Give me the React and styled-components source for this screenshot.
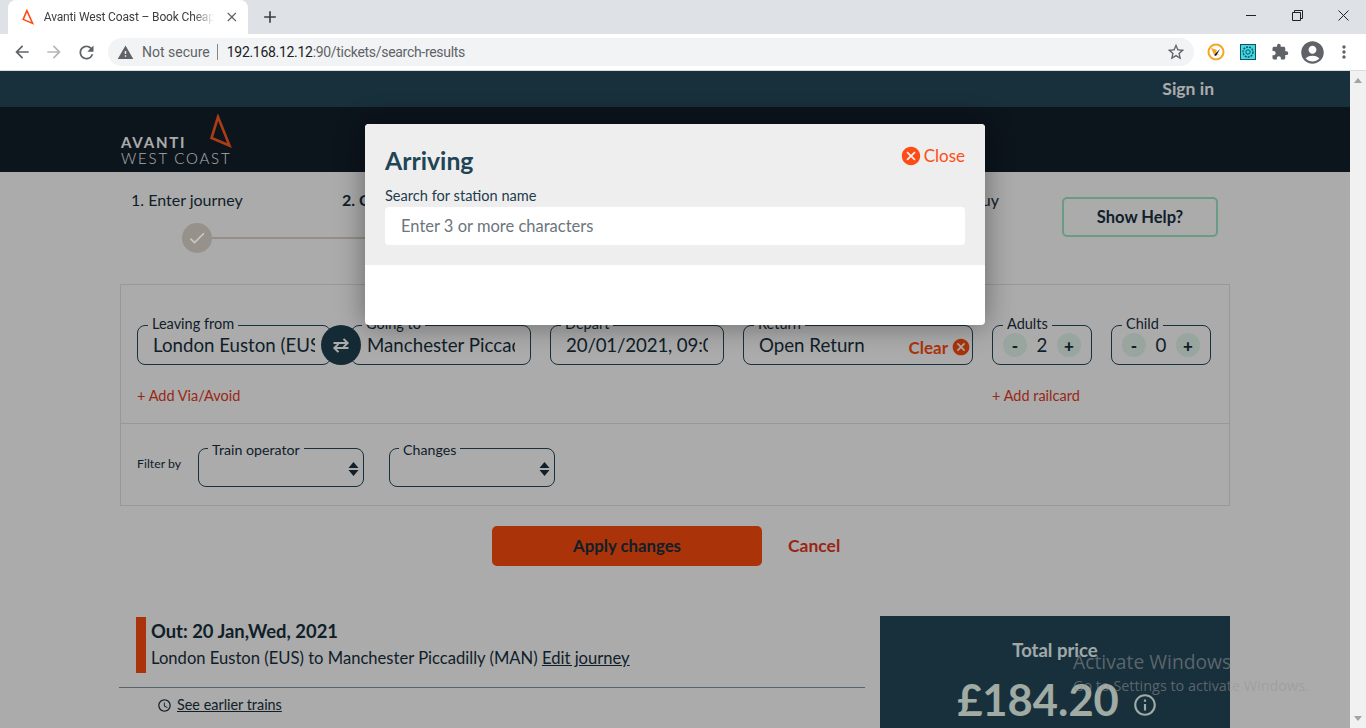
import styled, { createGlobalStyle } from "styled-components"
import {
  MdArrowBack, MdArrowForward, MdRefresh, MdWarning, MdStarBorder, MdExtension,
  MdAccountCircle, MdMoreVert, MdClose, MdAdd, MdCancel, MdCheck,
  MdAccessTime, MdInfoOutline,
} from "react-icons/md"

const GlobalStyle = createGlobalStyle`
  html, body { margin: 0; height: 728px; overflow: hidden; background: #fff; }
  * { box-sizing: border-box; }
  body { font-family: "Lato", "Liberation Sans", sans-serif; color: #17303e; }
`

const Shell = styled.div`
  width: 1366px;
  height: 728px;
  display: flex;
  flex-direction: column;
  overflow: hidden;
`

/* browser chrome */
const TabStrip = styled.div`
  height: 34px;
  background: #dee1e6;
  display: flex;
  align-items: flex-end;
  padding-left: 8px;
`
const Tab = styled.div`
  width: 240px;
  height: 34px;
  background: #fff;
  border-radius: 8px 8px 0 0;
  display: flex;
  align-items: center;
  padding: 0 8px 0 14px;
  gap: 10px;
`
const TabTitle = styled.span`
  width: 174px;
  overflow: hidden;
  white-space: nowrap;
  font: 12px "Roboto", "Liberation Sans", sans-serif;
  letter-spacing: -0.15px;
  color: #3c4043;
  -webkit-mask-image: linear-gradient(to right, #000 88%, transparent);
  mask-image: linear-gradient(to right, #000 88%, transparent);
`
const NewTab = styled.div`
  width: 28px;
  height: 28px;
  margin: 0 0 3px 8px;
  display: flex;
  align-items: center;
  justify-content: center;
  color: #3c4043;
`
const WindowControls = styled.div`
  margin-left: auto;
  height: 34px;
  display: flex;
  color: #202124;
`
const WindowButton = styled.div`
  width: 46px;
  height: 30px;
  display: flex;
  align-items: center;
  justify-content: center;
`
const Toolbar = styled.div`
  height: 37px;
  background: #fff;
  border-bottom: 1px solid #dadce0;
  display: flex;
  align-items: center;
  padding-left: 8px;
  position: relative;
`
const NavButton = styled.div`
  width: 28px;
  height: 28px;
  margin-right: 4px;
  display: flex;
  align-items: center;
  justify-content: center;
  color: ${(p) => (p.$off ? "#b4b6b9" : "#5f6368")};
`
const Omnibox = styled.div`
  width: 1086px;
  height: 28px;
  margin-left: 4px;
  border-radius: 14px;
  background: #f1f3f4;
  display: flex;
  align-items: center;
  padding: 0 8px 0 9px;
  font: 14px "Roboto", "Liberation Sans", sans-serif;
  color: #5f6368;
`
const Secure = styled.span`
  margin-left: 8px;
  padding-right: 7px;
  border-right: 1px solid #80868b;
  line-height: 16px;
`
const Url = styled.span`
  margin-left: 9px;
  letter-spacing: -0.3px;
  b { font-weight: 400; color: #202124; }
`
const StarSlot = styled.div`
  margin-left: auto;
  display: flex;
  color: #5f6368;
`
const Extensions = styled.div`
  display: flex;
  align-items: center;
  padding-left: 6px;
  color: #5f6368;
`
const ExtSlot = styled.div`
  width: 32px;
  height: 28px;
  display: flex;
  align-items: center;
  justify-content: center;
`

/* page */
const Viewport = styled.div`
  flex: 1;
  min-height: 0;
  display: flex;
  position: relative;
`
const Page = styled.div`
  width: 1350px;
  height: 657px;
  overflow: hidden;
  position: relative;
  background: #fff;
`
const Scrollbar = styled.div`
  width: 16px;
  background: #f1f1f1;
  display: flex;
  flex-direction: column;
  justify-content: space-between;
  align-items: center;
  padding: 7px 0;
`
const ScrollArrow = styled.div`
  width: 0;
  height: 0;
  border-left: 4px solid transparent;
  border-right: 4px solid transparent;
  ${(p) => (p.$down ? "border-top: 5px solid #a3a3a3;" : "border-bottom: 5px solid #a3a3a3;")}
`
const TopBar = styled.div`
  height: 36px;
  background: #24465a;
  display: flex;
  align-items: center;
  justify-content: flex-end;
  padding: 0 136px 2px 0;
  color: #fff;
  font-size: 17.500px;
  font-weight: 700;
`
const Masthead = styled.div`
  height: 65px;
  background: #131f2b;
  padding-left: 121px;
`
const Logo = styled.div`
  width: 112px;
  height: 65px;
  position: relative;
  color: #fff;
`
const LogoMark = styled.svg`
  position: absolute;
  left: 88px;
  top: 7px;
`
const LogoTop = styled.div`
  position: absolute;
  left: 0;
  top: 26px;
  font-size: 15px;
  line-height: 18px;
  font-weight: 700;
  letter-spacing: 1.8px;
`
const LogoBottom = styled.div`
  position: absolute;
  left: 0;
  top: 42px;
  font-size: 15px;
  line-height: 18px;
  font-weight: 300;
  letter-spacing: 1.800px;
  white-space: nowrap;
`
const Container = styled.div`
  width: 1110px;
  margin: 0 auto;
`
const StepRow = styled.div`
  height: 112px;
  display: flex;
  padding: 18px 12px 0 11px;
`
const Steps = styled.div`
  width: 868px;
  display: grid;
  grid-template-columns: 211px 211px 211px 1fr;
`
const Step = styled.div`
  font-size: 16px;
  line-height: 20px;
  font-weight: ${(p) => (p.$active ? 700 : 400)};
  text-align: ${(p) => (p.$end ? "right" : "left")};
`
const StepTrack = styled.div`
  margin: 13px -200px 0 51px;
  height: 30px;
  display: flex;
  align-items: center;
`
/* the done marker keeps its own muted colours above the dim layer */
const StepDot = styled.div`
  width: 30px;
  height: 30px;
  flex: none;
  position: relative;
  z-index: 6;
  border-radius: 50%;
  background: #96918a;
  color: #cbc8c3;
  display: flex;
  align-items: center;
  justify-content: center;
`
const StepLine = styled.div`
  flex: 1;
  height: 2px;
  background: #dcd4ca;
`
const HelpButton = styled.button`
  margin: 7px 0 0 auto;
  padding: 0;
  width: 156px;
  height: 40px;
  background: #fff;
  border: 2px solid #9fe8c6;
  border-radius: 5px;
  font: 700 16.500px "Lato", sans-serif;
  color: #17303e;
`
const SearchCard = styled.div`
  border: 1px solid #e6e3df;
`
const JourneySection = styled.div`
  padding: 32px 16px 17px;
  border-bottom: 1px solid #e6e3df;
`
const FieldRow = styled.div`
  display: flex;
  gap: 19px;
`
const Pair = styled.div`
  display: flex;
`
const Field = styled.fieldset`
  margin: 0;
  padding: 0;
  width: ${(p) => p.$w}px;
  height: ${(p) => p.$h || 48}px;
  min-width: 0;
  flex: none;
  border: 1px solid #244a5d;
  border-radius: 8px;
`
const Legend = styled.legend`
  margin-left: 10px;
  padding: 0 4px;
  font-size: 14.500px;
  line-height: 16px;
  transform: translateY(-1px);
`
const FilterLegend = styled(Legend)`
  margin-left: 9px;
  font-size: 14.200px;
  transform: translateY(2px);
`
const Value = styled.div`
  margin: -3px 15px 0;
  font-size: 18.700px;
  line-height: 30px;
  white-space: nowrap;
  overflow: hidden;
`
const DateValue = styled(Value)`
  letter-spacing: -0.15px;
`
const SwapButton = styled.div`
  width: 40px;
  height: 40px;
  margin: 8px -10px 0;
  position: relative;
  z-index: 1;
  flex: none;
  border-radius: 50%;
  background: #1f4151;
  display: flex;
  align-items: center;
  justify-content: center;
`
const ClearRow = styled.div`
  margin-top: -3px;
  height: 30px;
  padding: 0 1px 0 15px;
  display: flex;
  align-items: center;
  justify-content: space-between;
  font-size: 18.700px;
`
const ClearLink = styled.span`
  align-self: flex-end;
  height: 26px;
  display: flex;
  align-items: center;
  gap: 3px;
  font-size: 17px;
  font-weight: 700;
  color: #ff4c10;
`
const Counter = styled.div`
  margin-top: -3px;
  padding: 0 10px;
  display: flex;
  align-items: center;
  justify-content: space-between;
  height: 30px;
  font-size: 18.700px;
`
const Round = styled.div`
  width: 24px;
  height: 24px;
  border-radius: 50%;
  background: #e4f8ee;
  display: flex;
  align-items: center;
  justify-content: center;
  font-weight: 900;
  font-size: 17px;
  color: #17303e;
`
const LinkRow = styled.div`
  margin-top: 21px;
  display: flex;
  justify-content: space-between;
`
const AddLink = styled.a`
  width: ${(p) => p.$w || "auto"};
  font-size: 14.500px;
  line-height: 20px;
  color: #e53a22;
`
const FilterSection = styled.div`
  padding: 16px 16px 18px;
  display: flex;
  gap: 17px;
`
const FilterLabel = styled.span`
  font-size: 12.300px;
  margin-top: 16px;
`
const Selects = styled.div`
  display: flex;
  gap: 25px;
`
const SortIcon = styled.div`
  display: flex;
  justify-content: flex-end;
  padding: 6px 4px 0 0;
`
const Actions = styled.div`
  margin: 20px 0 0 372px;
  display: flex;
  align-items: center;
  gap: 26px;
`
const ApplyButton = styled.button`
  width: 270px;
  height: 40px;
  padding: 0 0 2px;
  border: 0;
  border-radius: 5px;
  background: #ff4c10;
  font: 700 16.800px "Lato", sans-serif;
  color: #17303e;
`
const CancelLink = styled.a`
  font-size: 17.500px;
  font-weight: 700;
  padding-bottom: 2px;
  color: #e5391f;
`
const Results = styled.div`
  margin-top: 50px;
  display: grid;
  grid-template-columns: 745px 350px;
  column-gap: 15px;
`
const OutBlock = styled.div`
  margin: 1px 0 0 16px;
  height: 56px;
  border-left: 10px solid #ff4c10;
  padding-left: 5px;
`
const OutTitle = styled.div`
  font-size: 18.400px;
  line-height: 28px;
  font-weight: 700;
`
const OutRoute = styled.div`
  font-size: 16.600px;
  line-height: 26px;
  white-space: nowrap;
  a { text-decoration: underline; }
`
const EarlierRow = styled.div`
  margin: 14px 0 0 -1px;
  border-top: 1px solid #7f95a3;
  padding: 8px 0 0 38px;
  display: flex;
  align-items: center;
  gap: 5px;
  font-size: 14.400px;
  line-height: 18px;
  span { text-decoration: underline; }
`
const PriceCard = styled.div`
  height: 180px;
  background: #24465a;
  padding-top: 22px;
  text-align: center;
  color: #eefcfb;
`
const PriceLabel = styled.div`
  font-size: 18.500px;
  line-height: 24px;
  font-weight: 700;
`
const PriceRow = styled.div`
  margin-top: 9px;
  padding-left: 5px;
  display: flex;
  align-items: center;
  justify-content: center;
  gap: 13px;
  font-size: 43.500px;
  line-height: 56px;
  font-weight: 700;
  color: #eefff4;
`
const InfoSlot = styled.div`
  display: flex;
  margin-top: 11px;
`
const Overlay = styled.div`
  position: absolute;
  inset: 0;
  z-index: 5;
  background: rgba(0, 0, 0, 0.33);
`
const Modal = styled.div`
  width: 620px;
  margin: 53px 0 0 365px;
  border-radius: 4px;
  background: #fff;
  box-shadow: 0 0 28px rgba(0, 0, 0, 0.4);
  overflow: hidden;
`
const ModalHead = styled.div`
  height: 141px;
  background: #eee;
  padding: 20px 20px 0;
`
const ModalTop = styled.div`
  display: flex;
  justify-content: space-between;
`
const ModalTitle = styled.h2`
  margin: 0;
  font-size: 24.800px;
  line-height: 34px;
  font-weight: 700;
  color: #1f4556;
`
const CloseLink = styled.a`
  display: flex;
  align-items: center;
  gap: 2px;
  height: 24px;
  padding-bottom: 1px;
  font-size: 17px;
  color: #ff4c15;
`
const SearchLabel = styled.div`
  margin-top: 9px;
  font-size: 14.600px;
  line-height: 17px;
  color: #1f3d4d;
`
const SearchInput = styled.input`
  display: block;
  width: 100%;
  height: 38px;
  margin-top: 3px;
  border: 0;
  border-radius: 4px;
  padding: 0 16px;
  background: #fff;
  font: 16.500px "Lato", sans-serif;
  &::placeholder { color: #6c757d; opacity: 1; }
`
const ModalBody = styled.div`
  height: 60px;
`
const Watermark = styled.div`
  position: absolute;
  left: 1073px;
  top: 579px;
  z-index: 6;
  color: rgba(150, 150, 150, 0.55);
  font-family: "Open Sans", "Noto Sans", sans-serif;
  white-space: nowrap;
  pointer-events: none;
`
const WatermarkTitle = styled.div`
  font-size: 19.300px;
  line-height: 24px;
`
const WatermarkHint = styled.div`
  margin-top: 2px;
  font-size: 14.400px;
  line-height: 20px;
`

function Sort() {
  return (
    <SortIcon>
      <svg width="11" height="14" viewBox="0 0 11 14">
        <path d="M5.500 0 10.500 6H.5zM.5 8h10l-5 6z" fill="#17303e" />
      </svg>
    </SortIcon>
  )
}

export default function App() {
  return (
    <Shell>
      <GlobalStyle />
      <TabStrip>
        <Tab>
          <svg width="12" height="16" viewBox="0 0 12 16">
            <path d="M5 1.500 1.200 10.500 10.800 14.500z" fill="none" stroke="#ff4c15" strokeWidth="1.600" />
          </svg>
          <TabTitle>Avanti West Coast – Book Cheap Train Tickets</TabTitle>
          <MdClose size={16} color="#5f6368" />
        </Tab>
        <NewTab><MdAdd size={20} /></NewTab>
        <WindowControls>
          <WindowButton>
            <svg width="11" height="11" viewBox="0 0 11 11"><path d="M0 5.500h10" stroke="#202124" /></svg>
          </WindowButton>
          <WindowButton>
            <svg width="11" height="11" viewBox="0 0 11 11">
              <path d="M.5 2.500h8v8h-8zM2.500 2.500v-2h8v8h-2" fill="none" stroke="#202124" />
            </svg>
          </WindowButton>
          <WindowButton>
            <svg width="11" height="11" viewBox="0 0 11 11"><path d="M.5.5l10 10M10.500.5l-10 10" stroke="#202124" /></svg>
          </WindowButton>
        </WindowControls>
      </TabStrip>
      <Toolbar>
        <NavButton><MdArrowBack size={20} /></NavButton>
        <NavButton $off><MdArrowForward size={20} /></NavButton>
        <NavButton><MdRefresh size={21} /></NavButton>
        <Omnibox>
          <MdWarning size={17} />
          <Secure>Not secure</Secure>
          <Url><b>192.168.12.12</b>:90/tickets/search-results</Url>
          <StarSlot><MdStarBorder size={20} /></StarSlot>
        </Omnibox>
        <Extensions>
          <ExtSlot>
            <svg width="18" height="18" viewBox="0 0 18 18">
              <circle cx="9" cy="9" r="7.500" fill="#fff" stroke="#f5a623" strokeWidth="2" />
              <path d="M4 5l6 2-1 2 4 4-5-3-1 2z" fill="#f5a623" />
              <path d="M13 6 7 12l2 1z" fill="#111" />
            </svg>
          </ExtSlot>
          <ExtSlot>
            <svg width="16" height="16" viewBox="0 0 16 16">
              <rect x=".5" y=".5" width="15" height="15" fill="#3fd8e6" stroke="#17505c" />
              <circle cx="8" cy="8" r="5" fill="none" stroke="#17505c" strokeWidth="1.400" strokeDasharray="2 1" />
              <circle cx="8" cy="8" r="2.200" fill="none" stroke="#17505c" />
            </svg>
          </ExtSlot>
          <ExtSlot><MdExtension size={18} /></ExtSlot>
          <ExtSlot><MdAccountCircle size={27} /></ExtSlot>
          <ExtSlot><MdMoreVert size={20} /></ExtSlot>
        </Extensions>
      </Toolbar>

      <Viewport>
        <Page>
          <TopBar>Sign in</TopBar>
          <Masthead>
            <Logo>
              <LogoMark width="24" height="36" viewBox="0 0 24 36">
                <path d="M9 3 2.500 24 20.500 31.500z" fill="none" stroke="#ff5a1f" strokeWidth="2.600" />
              </LogoMark>
              <LogoTop>AVANTI</LogoTop>
              <LogoBottom>WEST COAST</LogoBottom>
            </Logo>
          </Masthead>
          <Container>
            <StepRow>
              <Steps>
                <Step>
                  1. Enter journey
                  <StepTrack>
                    <StepDot><MdCheck size={20} /></StepDot>
                    <StepLine />
                  </StepTrack>
                </Step>
                <Step $active>2. Choose train</Step>
                <Step>3. Seats</Step>
                <Step $end>4. Buy</Step>
              </Steps>
              <HelpButton>Show Help?</HelpButton>
            </StepRow>

            <SearchCard>
              <JourneySection>
                <FieldRow>
                  <Pair>
                    <Field $w={194}>
                      <Legend>Leaving from</Legend>
                      <Value>London Euston (EUS)</Value>
                    </Field>
                    <SwapButton>
                      <svg width="20" height="17" viewBox="0 0 24 20">
                        <path d="M3 7h17M15 2l5 5-5 5M21 13H4M9 8l-5 5 5 5" fill="none" stroke="#fff" strokeWidth="2.400" />
                      </svg>
                    </SwapButton>
                    <Field $w={180}>
                      <Legend>Going to</Legend>
                      <Value>Manchester Piccadilly</Value>
                    </Field>
                  </Pair>
                  <Field $w={174}>
                    <Legend>Depart</Legend>
                    <DateValue>20/01/2021, 09:00</DateValue>
                  </Field>
                  <Field $w={230}>
                    <Legend>Return</Legend>
                    <ClearRow>
                      Open Return
                      <ClearLink>Clear <MdCancel size={20} /></ClearLink>
                    </ClearRow>
                  </Field>
                  <Field $w={100}>
                    <Legend>Adults</Legend>
                    <Counter><Round>-</Round>2<Round>+</Round></Counter>
                  </Field>
                  <Field $w={100}>
                    <Legend>Child</Legend>
                    <Counter><Round>-</Round>0<Round>+</Round></Counter>
                  </Field>
                </FieldRow>
                <LinkRow>
                  <AddLink>+ Add Via/Avoid</AddLink>
                  <AddLink $w="221px">+ Add railcard</AddLink>
                </LinkRow>
              </JourneySection>
              <FilterSection>
                <FilterLabel>Filter by</FilterLabel>
                <Selects>
                  <Field $w={166} $h={47}>
                    <FilterLegend>Train operator</FilterLegend>
                    <Sort />
                  </Field>
                  <Field $w={166} $h={47}>
                    <FilterLegend>Changes</FilterLegend>
                    <Sort />
                  </Field>
                </Selects>
              </FilterSection>
            </SearchCard>

            <Actions>
              <ApplyButton>Apply changes</ApplyButton>
              <CancelLink>Cancel</CancelLink>
            </Actions>

            <Results>
              <div>
                <OutBlock>
                  <OutTitle>Out: 20 Jan,Wed, 2021</OutTitle>
                  <OutRoute>London Euston (EUS) to Manchester Piccadilly (MAN) <a>Edit journey</a></OutRoute>
                </OutBlock>
                <EarlierRow>
                  <MdAccessTime size={15} />
                  <span>See earlier trains</span>
                </EarlierRow>
              </div>
              <PriceCard>
                <PriceLabel>Total price</PriceLabel>
                <PriceRow>£184.20 <InfoSlot><MdInfoOutline size={26} /></InfoSlot></PriceRow>
              </PriceCard>
            </Results>
          </Container>

          <Overlay>
            <Modal>
              <ModalHead>
                <ModalTop>
                  <ModalTitle>Arriving</ModalTitle>
                  <CloseLink><MdCancel size={22} /> Close</CloseLink>
                </ModalTop>
                <SearchLabel>Search for station name</SearchLabel>
                <SearchInput placeholder="Enter 3 or more characters" />
              </ModalHead>
              <ModalBody />
            </Modal>
          </Overlay>
        </Page>
        <Scrollbar>
          <ScrollArrow />
          <ScrollArrow $down />
        </Scrollbar>
        <Watermark>
          <WatermarkTitle>Activate Windows</WatermarkTitle>
          <WatermarkHint>Go to Settings to activate Windows.</WatermarkHint>
        </Watermark>
      </Viewport>
    </Shell>
  )
}
